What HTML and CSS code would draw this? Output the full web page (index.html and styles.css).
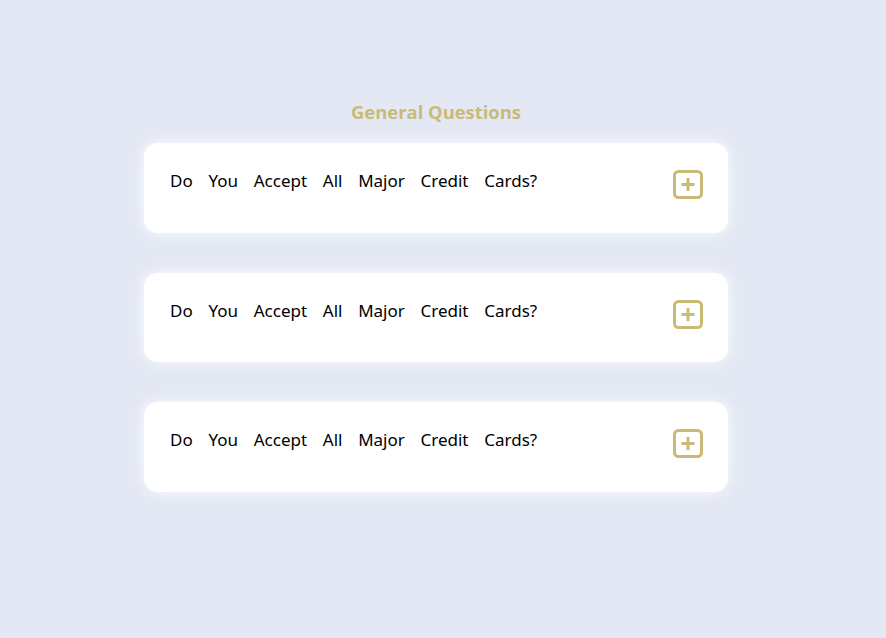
FILE: index.html
```html
<!DOCTYPE html>
<html>
<head>
<meta charset="utf-8">
<link rel="stylesheet" href="styles.css">
</head>
<body>
<main class="faq">
  <h2 class="faq-title">General Questions</h2>
  <div class="faq-list">
    <div class="faq-card">
      <p class="faq-q">Do You Accept All Major Credit Cards?</p>
      <svg class="faq-icon" viewBox="0 0 30 29" width="30" height="29"><rect x="1.5" y="1.5" width="27" height="26" rx="4" fill="none" stroke="#c9bb76" stroke-width="3"/><path d="M15 8v13M8.5 14.5h13" stroke="#c9bb76" stroke-width="3"/></svg>
    </div>
    <div class="faq-card">
      <p class="faq-q">Do You Accept All Major Credit Cards?</p>
      <svg class="faq-icon" viewBox="0 0 30 29" width="30" height="29"><rect x="1.5" y="1.5" width="27" height="26" rx="4" fill="none" stroke="#c9bb76" stroke-width="3"/><path d="M15 8v13M8.5 14.5h13" stroke="#c9bb76" stroke-width="3"/></svg>
    </div>
    <div class="faq-card">
      <p class="faq-q">Do You Accept All Major Credit Cards?</p>
      <svg class="faq-icon" viewBox="0 0 30 29" width="30" height="29"><rect x="1.5" y="1.5" width="27" height="26" rx="4" fill="none" stroke="#c9bb76" stroke-width="3"/><path d="M15 8v13M8.5 14.5h13" stroke="#c9bb76" stroke-width="3"/></svg>
    </div>
  </div>
</main>
</body>
</html>
```
FILE: styles.css
```css
html, body {
  margin: 0;
  padding: 0;
  background: #e3e8f4;
  height: 100%;
}
.faq {
  padding: 99px 158px 0 144px;
  display: flex;
  flex-direction: column;
  align-items: center;
}
.faq-title {
  margin: 0 0 18px;
  font-family: "Open Sans", sans-serif;
  font-weight: 700;
  font-size: 18.4px;
  line-height: 26px;
  color: #c9bb76;
}
.faq-list {
  width: 584px;
  display: flex;
  flex-direction: column;
  gap: 40px;
}
.faq-card {
  background: #fff;
  border-radius: 14px;
  height: 89.5px;
  box-sizing: border-box;
  padding: 26px 25px 0 26px;
  display: flex;
  justify-content: space-between;
  align-items: flex-start;
  box-shadow: 0 0 14px rgba(255,255,255,0.9);
}
.faq-q {
  margin: 0;
  font-family: "Noto Sans", sans-serif;
  font-size: 17px;
  line-height: 24px;
  color: #000;
  word-spacing: 11.3px;
}
.faq-icon {
  margin-top: 1px;
  display: block;
}
```
